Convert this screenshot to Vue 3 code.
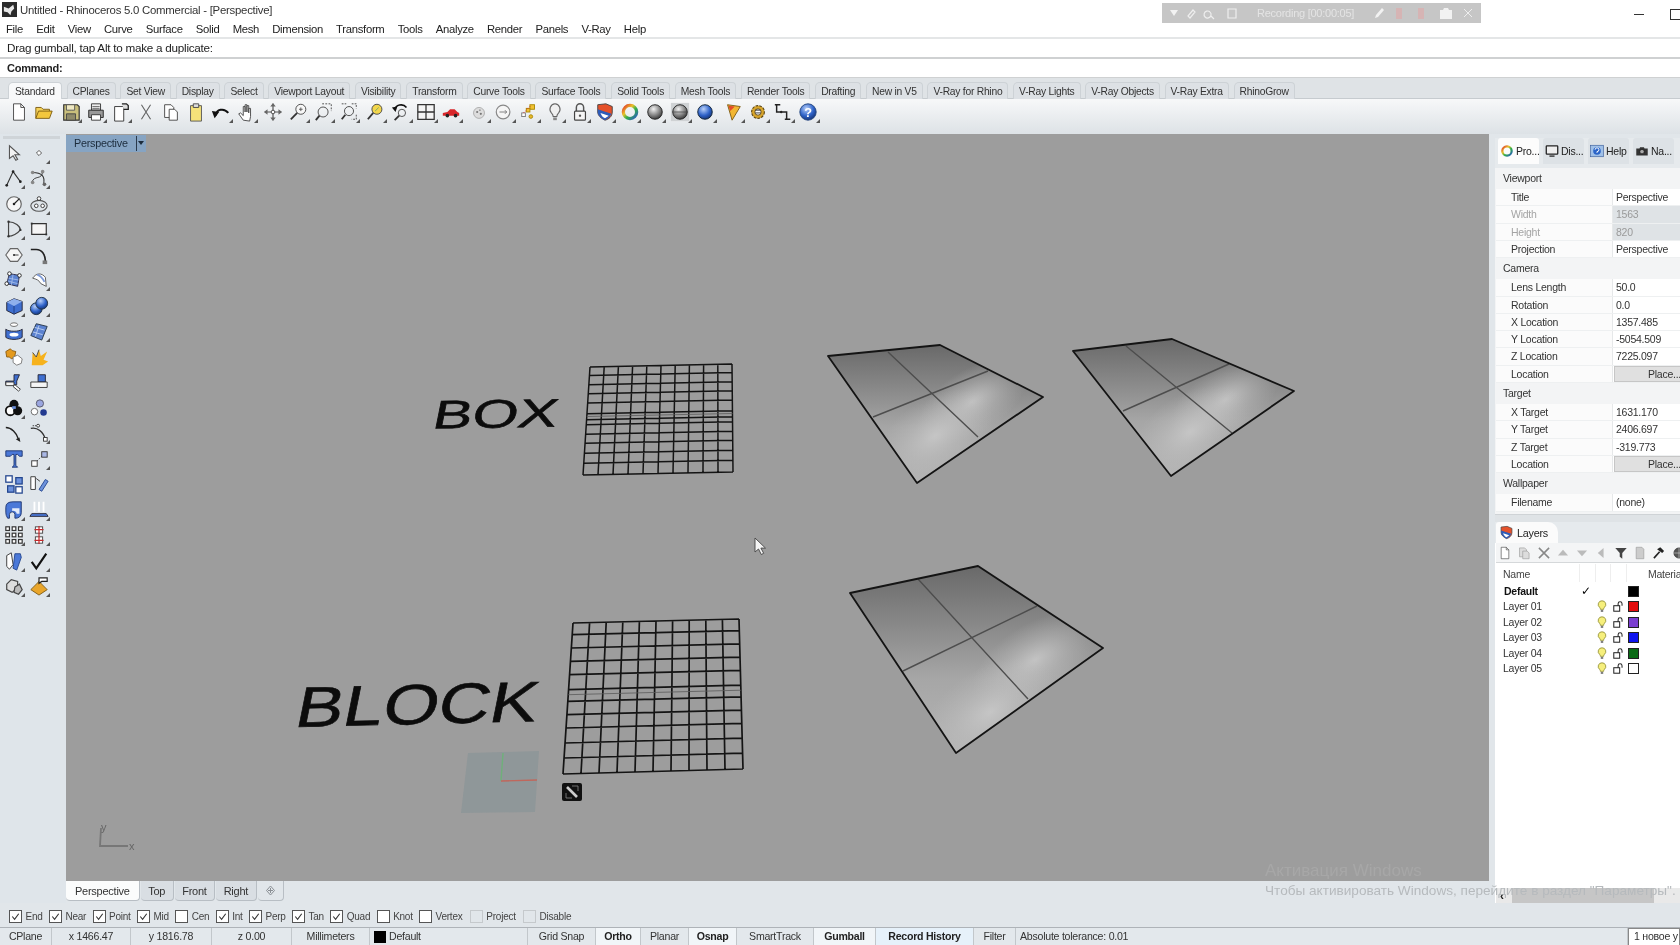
<script setup>
const menus = ['File', 'Edit', 'View', 'Curve', 'Surface', 'Solid', 'Mesh', 'Dimension', 'Transform', 'Tools', 'Analyze', 'Render', 'Panels', 'V-Ray', 'Help']
const toolTabs = ['Standard', 'CPlanes', 'Set View', 'Display', 'Select', 'Viewport Layout', 'Visibility', 'Transform', 'Curve Tools', 'Surface Tools', 'Solid Tools', 'Mesh Tools', 'Render Tools', 'Drafting', 'New in V5', 'V-Ray for Rhino', 'V-Ray Lights', 'V-Ray Objects', 'V-Ray Extra', 'RhinoGrow']

// icon bodies, all drawn on a 22x22 box
const K = 'fill="none" stroke="#333" stroke-width="1.2"'
const ic = {
  page: `<path d="M5 2h8l4 4v14H5z" fill="#fff" stroke="#444"/><path d="M13 2v4h4" fill="none" stroke="#444"/>`,
  open: `<path d="M2 18V6h6l2 2h7v3" fill="#f5d25a" stroke="#7a5a10"/><path d="M2 18l3-8h15l-3 8z" fill="#f3c73d" stroke="#7a5a10"/>`,
  save: `<path d="M3 3h15l2 2v15H3z" fill="#c9bf7c" stroke="#333" stroke-width="1.3"/><path d="M6 3h9v6H6z" fill="#efe9c4" stroke="#555"/><path d="M6 13h10v7H6z" fill="#8e8a6a" stroke="#444"/>`,
  print: `<path d="M6 2h10v7H6z" fill="#eee" stroke="#333"/><path d="M3 9h16v8H3z" fill="#999" stroke="#222"/><path d="M6 14h10v6H6z" fill="#fff" stroke="#333"/><path d="M7 5h8M7 7h8" stroke="#666"/>`,
  sheet: `<path d="M4 5h10v16H4z" fill="#fff" stroke="#333"/><path d="M12 2h5l2 2v4h-5" fill="#ddd" stroke="#222" stroke-width="1.4"/>`,
  cut: `<path d="M6 3l10 16M16 3L6 19" ${K} stroke-width="1.5" opacity=".75"/>`,
  copy: `<path d="M4 3h7l3 3v11H4z" fill="#fff" stroke="#444"/><path d="M9 8h6l3 3v9H9z" fill="#fff" stroke="#444"/>`,
  paste: `<path d="M5 4h12v17H5z" fill="#f5e27a" stroke="#555" rx="2"/><path d="M8 2h6v4H8z" fill="#ddd" stroke="#444"/>`,
  undo: `<path d="M5 15C6 8 14 6 19 12" fill="none" stroke="#111" stroke-width="2.2"/><path d="M1 10l8 1-5 7z" fill="#111"/>`,
  hand: `<path d="M8 20l-5-7 2-1 3 3V5l2 0v6-8h2v8-7h2v8-5h2v9l-1 5z" fill="#fff" stroke="#444"/>`,
  move: `<path d="M11 2v18M2 11h18" stroke="#555" stroke-width="1.3"/><path d="M11 1l-3 4h6zM11 21l-3-4h6zM1 11l4-3v6zM21 11l-4-3v6z" fill="#666"/><circle cx="11" cy="11" r="2" fill="#fff" stroke="#444"/>`,
  zoom: `<circle cx="13" cy="8" r="5.5" fill="#f7f7f7" stroke="#444"/><path d="M9 12l-7 7" stroke="#333" stroke-width="2"/><path d="M11 8h4M13 6v4" stroke="#555"/>`,
  zoomSel: `<circle cx="10" cy="11" r="5.5" fill="none" stroke="#444"/><path d="M6 15l-4 5" stroke="#333" stroke-width="2"/><path d="M9 2h10v8" fill="none" stroke="#444" stroke-dasharray="2 1.5"/>`,
  zoomExt: `<circle cx="11" cy="10" r="5" fill="none" stroke="#444"/><path d="M7 14l-4 5" stroke="#333" stroke-width="2"/><path d="M3 2h5M14 2h5v5M19 14v5h-5" fill="none" stroke="#444" stroke-dasharray="2 1.2"/>`,
  zoomTgt: `<circle cx="12" cy="8" r="5.5" fill="#f3d64c" stroke="#444"/><path d="M8 12l-6 7" stroke="#333" stroke-width="2"/><path d="M10 10l4-4" stroke="#7a6"/>`,
  rotate: `<path d="M4 9C5 3 13 1 17 6" fill="none" stroke="#111" stroke-width="1.8"/><path d="M1 6l6-1-2 6z" fill="#111"/><circle cx="12" cy="12" r="4" fill="none" stroke="#444"/><path d="M9 15l-5 5" stroke="#333" stroke-width="2"/>`,
  four: `<path d="M2 3h18v16H2z" fill="#f4f4f4" stroke="#333" stroke-width="1.4"/><path d="M11 3v16M2 11h18" stroke="#333" stroke-width="1.4"/>`,
  car: `<path d="M2 15v-3l5-1 3-3h5l3 3 2 1v3z" fill="#d8262a"/><circle cx="7" cy="15" r="2" fill="#222"/><circle cx="16" cy="15" r="2" fill="#222"/>`,
  dots: `<circle cx="11" cy="12" r="6" fill="#ddd" stroke="#aaa"/><circle cx="9" cy="11" r="1.2" fill="#777"/><circle cx="13" cy="13" r="1.2" fill="#777"/><circle cx="12" cy="9" r="1" fill="#999"/>`,
  clock: `<circle cx="10" cy="11" r="7.5" fill="#f5f5f5" stroke="#888" stroke-width="1.3"/><path d="M6 11h8l-2-2M14 11l-2 2" fill="none" stroke="#777"/>`,
  snaps: `<rect x="3" y="12" width="4" height="4" fill="#fff" stroke="#777"/><rect x="12" y="3" width="5" height="5" fill="#f1c232" stroke="#a80"/><rect x="8" y="7" width="4" height="4" fill="#f1c232" stroke="#a80"/><path d="M5 12l8-8" stroke="#d33" stroke-dasharray="1.5 1.5"/><circle cx="13" cy="16" r="2" fill="#e8b82c" stroke="#a80"/>`,
  bulb: `<path d="M11 2a6 6 0 0 0-4 10c1 1 2 3 2 4h4c0-1 1-3 2-4A6 6 0 0 0 11 2z" fill="#f0f0f0" stroke="#666" stroke-width="1.2"/><path d="M9 17h4v3H9z" fill="#888"/>`,
  lock: `<path d="M7 10V6a4 4 0 0 1 8 0v4" fill="none" stroke="#555" stroke-width="1.6"/><rect x="5" y="10" width="12" height="10" rx="1" fill="#f5f5f5" stroke="#444" stroke-width="1.3"/><circle cx="11" cy="15" r="1.3" fill="#555"/>`,
  layers: `<path d="M3 3l9-1 7 3v6c0 5-4 8-8 9-4-2-8-5-8-9z" fill="#e5512a" stroke="#444"/><path d="M3 8l15 5c-1 3-4 6-7 7-4-2-8-5-8-9z" fill="#2e5cb8"/><path d="M6 12l9 3c-1 1-3 2-4 3-2-1-4-3-5-6z" fill="#fff"/>`,
  ring: `<circle cx="11" cy="11" r="7.3" fill="none" stroke="url(#ringGrad)" stroke-width="3.6"/>`,
  sphere: `<circle cx="11" cy="11" r="8" fill="url(#graySphere)" stroke="#222"/>`,
  sphereBox: `<rect x="1" y="1" width="20" height="20" fill="#cfd2d4"/><circle cx="11" cy="11" r="8" fill="url(#graySphere)" stroke="#222"/><path d="M3 11h16" stroke="#444" stroke-width=".8"/>`,
  blueSphere: `<circle cx="11" cy="11" r="8" fill="url(#blueSphere)" stroke="#123"/>`,
  funnel: `<path d="M5 3l14 2-9 15z" fill="#f2b632" stroke="#7c5a15"/><path d="M6 4l7 1-5 5z" fill="#e24b2a"/>`,
  gears: `<circle cx="11" cy="11" r="7" fill="#d8a52a" stroke="#5a430f" stroke-width="1.2" stroke-dasharray="3 1.2"/><circle cx="11" cy="11" r="3.5" fill="#fff" stroke="#5a430f"/><path d="M8 9h6M8 12h6" stroke="#333"/>`,
  dims: `<path d="M4 3v8h11v8" fill="none" stroke="#222" stroke-width="1.6"/><path d="M2 3h6M13 19h6" stroke="#222" stroke-width="1.6"/><circle cx="9" cy="11" r="1.3" fill="#222"/>`,
  help: `<circle cx="11" cy="11" r="9" fill="url(#blueSphere)" stroke="#23467f"/><text x="11" y="16" text-anchor="middle" font-family="Liberation Sans, sans-serif" font-weight="700" font-size="14" fill="#fff">?</text>`,

  arrow: `<path d="M6 3v14l4-3 3 5 2-1-3-5h5z" fill="#f2f2f2" stroke="#555" stroke-width="1.2"/>`,
  point: `<rect x="9" y="9" width="4" height="4" transform="rotate(45 11 11)" fill="#fff" stroke="#555"/>`,
  poly: `<path d="M3 19L10 4l8 11" ${K}/><circle cx="3" cy="19" r="1.5" fill="#222"/><circle cx="10" cy="4" r="1.5" fill="#222"/><circle cx="18" cy="15" r="1.5" fill="#222"/>`,
  curve: `<path d="M4 5c10 0 14 4 12 13" ${K}/><path d="M3 16C6 7 14 14 15 4" fill="none" stroke="#333"/><circle cx="4" cy="5" r="2" fill="#888"/><circle cx="15" cy="4" r="2" fill="#888"/><circle cx="4" cy="16" r="2" fill="#888"/><circle cx="17" cy="18" r="2" fill="#666"/>`,
  circle: `<circle cx="11" cy="11" r="8" fill="#f6f6f6" stroke="#666" stroke-width="1.3"/><path d="M11 11l6-6" stroke="#222" stroke-width="1.3"/><circle cx="11" cy="11" r="1.4" fill="#222"/>`,
  ellipse: `<ellipse cx="11" cy="13" rx="9" ry="6" fill="none" stroke="#555" stroke-width="1.2"/><circle cx="11" cy="5" r="2" fill="#fff" stroke="#333"/><circle cx="8" cy="13" r="2" fill="#fff" stroke="#333"/><circle cx="15" cy="13" r="2" fill="#fff" stroke="#333"/>`,
  arc: `<path d="M5 3c7 0 13 5 13 9-3 4-9 7-13 7z" fill="none" stroke="#444" stroke-width="1.3"/><circle cx="5" cy="3" r="1.3" fill="#333"/><circle cx="5" cy="19" r="1.3" fill="#333"/><circle cx="18" cy="12" r="1.3" fill="#333"/>`,
  rect: `<path d="M3 5h16v12H3z" fill="#f5f5f5" stroke="#333" stroke-width="1.3"/><rect x="2" y="4" width="2" height="2" fill="#333"/><rect x="18" y="16" width="2" height="2" fill="#333"/>`,
  hex: `<path d="M7 4h8l5 7-5 7H7l-5-7z" fill="#f6f6f6" stroke="#666" stroke-width="1.2"/><circle cx="11" cy="11" r="1.2" fill="#333"/><path d="M11 11h5" stroke="#333"/>`,
  fillet: `<path d="M2 5h6c6 0 10 5 10 14" fill="none" stroke="#222" stroke-width="1.8"/><rect x="15" y="17" width="5" height="4" fill="#777"/>`,
  patch: `<path d="M6 4l11 2-2 12-12-3z" fill="#5b82d0" stroke="#224"/><path d="M5 9l11 2M4 12l11 3M10 5l-2 12" stroke="#bcd0f2" stroke-width=".7"/><circle cx="6" cy="4" r="2" fill="#fff" stroke="#222"/><circle cx="17" cy="6" r="2" fill="#fff" stroke="#222"/><circle cx="3" cy="15" r="2" fill="#fff" stroke="#222"/>`,
  sweep: `<path d="M4 9C8 3 14 3 18 8l1 10-6-3C11 11 8 10 4 9z" fill="#fff" stroke="#555"/><path d="M9 5c3 1 6 4 8 8" stroke="#7e9bd8" stroke-width="2" fill="none"/>`,
  box: `<path d="M3 7l8-4 9 3v10l-9 4-8-4z" fill="#3f6fd0" stroke="#223"/><path d="M3 7l8 4 9-5-9-3z" fill="#8fb0ec"/><path d="M11 11v9" stroke="#1e3c80"/>`,
  spheres: `<circle cx="8" cy="14" r="6.5" fill="url(#blueSphere)" stroke="#234"/><circle cx="14" cy="8" r="6.5" fill="url(#blueSphere)" stroke="#234"/>`,
  ringSurf: `<path d="M2 9v9c4 3 14 3 18 0V9c-3 3-15 3-18 0z" fill="#3f6fd0" stroke="#223"/><ellipse cx="11" cy="15" rx="5" ry="2" fill="#fff"/><ellipse cx="11" cy="4" rx="4" ry="2" fill="#fff" stroke="#666"/>`,
  sheet2: `<path d="M8 3l12 3-6 15L2 16z" fill="#5b82d0" stroke="#234"/><path d="M6 7l11 3M4 12l11 3M11 5l-4 12" stroke="#bcd0f2"/>`,
  puzzle: `<path d="M2 5l5-3 2 2 4 1-1 4 1 2-5 2-2-2-3 0z" fill="#e49a1e" stroke="#8a5a10"/><path d="M10 11l5-2 5 4-1 5-5 2-4-3z" fill="#fff" stroke="#777"/>`,
  burst: `<path d="M3 20l1-14 4 5 3-8 2 7 7-5-4 9 5 2-6 4z" fill="#f6b21d"/><path d="M4 6l4 5 3-8" fill="none" stroke="#444"/>`,
  tool1: `<path d="M11 3h6l-3 7v4H2v-4h9z" fill="#3f6fd0" stroke="#223"/><path d="M2 11h9v4H2z" fill="#f5f5f5" stroke="#333"/><path d="M12 14l6 5-2 2-6-5z" fill="#fff" stroke="#333"/>`,
  tool2: `<path d="M10 3h8v8h-8z" fill="#3f6fd0" stroke="#223"/><path d="M2 11h18v6H2z" fill="#f5f5f5" stroke="#333"/>`,
  bool: `<circle cx="11" cy="7" r="5" fill="#111"/><circle cx="7" cy="14" r="5" fill="#fff" stroke="#111" stroke-width="2"/><circle cx="15" cy="14" r="5" fill="#111"/><path d="M9 9h4v3H9z" fill="#6b8ed8"/>`,
  trio: `<circle cx="12" cy="6" r="4" fill="#9aa6e0" stroke="#556"/><circle cx="6" cy="15" r="3.6" fill="#fff" stroke="#666"/><circle cx="16" cy="16" r="3.6" fill="#223a90"/>`,
  bend: `<path d="M2 5c6 0 12 6 14 13" fill="none" stroke="#222" stroke-width="1.6"/><path d="M18 21l-5-3 4-2z" fill="#222"/>`,
  offset: `<path d="M2 6c7-2 14 4 16 12" fill="none" stroke="#333" stroke-width="1.5"/><path d="M4 3h4" stroke="#333" stroke-dasharray="1.5 1"/><circle cx="10" cy="3" r="1.6" fill="#fff" stroke="#333"/><rect x="16" y="16" width="4" height="4" fill="#fff" stroke="#333"/>`,
  tee: `<path d="M2 2h18v6h-3l-2-2h-2v12l2 2H9l2-2V6H9L7 8H2z" fill="#4a78d8" stroke="#1e3570"/>`,
  diag: `<rect x="3" y="13" width="6" height="6" fill="#fff" stroke="#333"/><rect x="14" y="3" width="6" height="6" fill="#aab8e6" stroke="#333"/><path d="M9 13l5-5" stroke="#333" stroke-dasharray="1.5 1.5"/>`,
  group: `<rect x="2" y="2" width="7" height="7" fill="#fff" stroke="#23468f" stroke-width="1.4"/><rect x="13" y="4" width="7" height="7" fill="#6d92dc" stroke="#23468f" stroke-width="1.4"/><rect x="4" y="13" width="7" height="7" fill="#6d92dc" stroke="#23468f" stroke-width="1.4"/><rect x="13" y="14" width="7" height="7" fill="#fff" stroke="#23468f" stroke-width="1.4"/>`,
  scale: `<path d="M2 3h5v14H2z" fill="#fff" stroke="#333"/><path d="M11 17l7-11 3 2-7 11z" fill="#6d92dc" stroke="#23468f"/><path d="M8 5l4 3" stroke="#333"/>`,
  arch: `<path d="M2 8q0-6 8-6h9v12c0 4-3 6-6 6h-1v-4a3 3 0 0 0-6 0v4H4q-2-3-2-6z" fill="#4a78d8" stroke="#1e3570"/><path d="M9 9h8v6h-3a4 4 0 0 0-5-3z" fill="#fff" opacity=".85"/>`,
  pins: `<path d="M6 2v11M11 2v11M16 2v11" stroke="#fff" stroke-width="2"/><path d="M3 15h16l2 3H1z" fill="#4a78d8" stroke="#223"/>`,
  array: `<g fill="#fff" stroke="#333" stroke-width="1.3"><rect x="2" y="2" width="4" height="4"/><rect x="9" y="2" width="4" height="4"/><rect x="16" y="2" width="4" height="4"/><rect x="2" y="9" width="4" height="4"/><rect x="9" y="9" width="4" height="4"/><rect x="16" y="9" width="4" height="4"/><rect x="2" y="16" width="4" height="4"/><rect x="9" y="16" width="4" height="4"/><rect x="16" y="16" width="4" height="4"/></g>`,
  chain: `<rect x="7" y="2" width="8" height="7" fill="#fff" stroke="#444"/><rect x="7" y="13" width="8" height="7" fill="#fff" stroke="#444"/><path d="M11 1v20M6 5h10M6 17h10" stroke="#c8282a" stroke-width="1.3"/>`,
  sheets: `<path d="M3 5l5-3 2 13-4 5-3-3z" fill="#fff" stroke="#333"/><path d="M12 3h6l1 4-5 14-4-2z" fill="#4a78d8" stroke="#23468f"/>`,
  check: `<path d="M3 12l5 7L19 3" fill="none" stroke="#111" stroke-width="2.4"/>`,
  cubes: `<path d="M3 9l5-5 7 2v7l-6 5-6-3z" fill="#ddd" stroke="#444" stroke-width="1.3"/><path d="M12 12l5-3 3 6-4 5-5-2z" fill="#bbb" stroke="#444" stroke-width="1.3"/>`,
  cone: `<path d="M2 15l9-9 9 9-9 6z" fill="#e9a52a" stroke="#7c5a15"/><path d="M11 2h9v4h-6l-3 2z" fill="#fff" stroke="#222" stroke-width="1.3"/>`,

  hammer: `<path d="M3 19L12 9" stroke="#222" stroke-width="2.6"/><path d="M8 5l5-3 6 6-3 3z" fill="#222"/>`,
  globe: `<circle cx="11" cy="11" r="8" fill="#555" stroke="#222"/><path d="M11 3v16M3 11h16" stroke="#ccc"/>`
}

const topIcons = [
  ['page'], ['open'], ['save', 1, 2], ['print', 1], ['sheet', 1], ['cut'], ['copy'], ['paste'], ['undo', 1], ['hand', 1],
  ['move', 0, 2], ['zoom', 1], ['zoomSel', 1], ['zoomExt', 1], ['zoomTgt', 1, 2], ['rotate', 1], ['four', 1], ['car', 1],
  ['dots', 1, 3], ['clock', 1], ['snaps', 1], ['bulb', 1], ['lock', 1], ['layers', 1], ['ring', 1], ['sphere', 1],
  ['sphereBox', 1], ['blueSphere', 1], ['funnel', 1, 3], ['gears', 1], ['dims', 1], ['help', 1]
].map(([name, fly, gap]) => ({ name, fly: !!fly, gap: gap || 0 }))

const sideRows = [
  [['arrow', 0], ['point', 1]], [['poly', 1], ['curve', 1]], [['circle', 1], ['ellipse', 1]], [['arc', 1], ['rect', 1]],
  [['hex', 1], ['fillet', 0]], [['patch', 1], ['sweep', 1]], [['box', 1], ['spheres', 1]], [['ringSurf', 1], ['sheet2', 1]],
  [['puzzle', 0], ['burst', 0]], [['tool1', 0], ['tool2', 0]], [['bool', 1], ['trio', 0]], [['bend', 0], ['offset', 1]],
  [['tee', 0], ['diag', 1]], [['group', 0], ['scale', 0]], [['arch', 1], ['pins', 1]], [['array', 1], ['chain', 1]],
  [['sheets', 1], ['check', 1]], [['cubes', 1], ['cone', 1]]
]

const propRows = [
  { head: 'Viewport' },
  { label: 'Title', value: 'Perspective' },
  { label: 'Width', value: '1563', off: true },
  { label: 'Height', value: '820', off: true },
  { label: 'Projection', value: 'Perspective' },
  { head: 'Camera' },
  { label: 'Lens Length', value: '50.0' },
  { label: 'Rotation', value: '0.0' },
  { label: 'X Location', value: '1357.485' },
  { label: 'Y Location', value: '-5054.509' },
  { label: 'Z Location', value: '7225.097' },
  { label: 'Location', button: 'Place...' },
  { head: 'Target' },
  { label: 'X Target', value: '1631.170' },
  { label: 'Y Target', value: '2406.697' },
  { label: 'Z Target', value: '-319.773' },
  { label: 'Location', button: 'Place...' },
  { head: 'Wallpaper' },
  { label: 'Filename', value: '(none)' }
]

const layers = [
  { name: 'Layer 01', color: '#e30d0d' },
  { name: 'Layer 02', color: '#7b3fd0' },
  { name: 'Layer 03', color: '#0f14ee' },
  { name: 'Layer 04', color: '#0b6b16' },
  { name: 'Layer 05', color: '#ffffff' }
]

const snaps = [
  ['End', 1], ['Near', 1], ['Point', 1], ['Mid', 1], ['Cen', 0], ['Int', 1], ['Perp', 1], ['Tan', 1], ['Quad', 1], ['Knot', 0], ['Vertex', 0], ['Project', 0, 1], ['Disable', 0, 1]
].map(([name, on, dim]) => ({ name, on: !!on, dim: !!dim }))

const statusCells = [
  { text: 'CPlane', w: 52 }, { text: 'x 1466.47', w: 79 }, { text: 'y 1816.78', w: 81 }, { text: 'z 0.00', w: 80 }, { text: 'Millimeters', w: 78 }
]
const statusToggles = [
  { text: 'Grid Snap', w: 68 }, { text: 'Ortho', w: 45, on: 1 }, { text: 'Planar', w: 48 }, { text: 'Osnap', w: 48, on: 1 },
  { text: 'SmartTrack', w: 77 }, { text: 'Gumball', w: 62, on: 1 }, { text: 'Record History', w: 98, on: 2 }, { text: 'Filter', w: 42 }
]

// wireframe grids
function lerp(a, b, t) { return [a[0] + (b[0] - a[0]) * t, a[1] + (b[1] - a[1]) * t] }
function seg(p, q) { return `M${p[0].toFixed(1)} ${p[1].toFixed(1)}L${q[0].toFixed(1)} ${q[1].toFixed(1)}` }
function rowPath(c, rows, last) {
  return rows.map(r => seg(lerp(c[0], c[3], r / last), lerp(c[1], c[2], r / last))).join('')
}
function colPath(c) {
  let d = ''
  for (let i = 0; i <= 10; i++) d += seg(lerp(c[0], c[1], i / 10), lerp(c[3], c[2], i / 10))
  return d
}
const upperBox = [[590, 367], [732, 364], [733, 472], [583, 475]]
const lowerBox = [[573, 623], [739, 619], [743, 769], [563, 774]]
const upperGrid = colPath(upperBox) + rowPath(upperBox, [0, 25, 53, 80, 108, 140, 158, 173, 201, 228, 258, 288, 323], 323)
const lowerGrid = colPath(lowerBox) + rowPath(lowerBox, [0, 35, 75, 115, 155, 200, 235, 275, 315, 360, 405, 453], 453)
const bandLines = rowPath(upperBox, [148], 323) + rowPath(lowerBox, [215], 453)

const planes = [
  { id: 'pa', pts: '828,356 940,345 1043,397 917,483', inner: 'M888 352L978 437M873 417L988 371', spots: [[972, 402, 62, 32], [935, 436, 64, 38]] },
  { id: 'pb', pts: '1073,351 1172,339 1294,391 1171,476', inner: 'M1126 346L1232 433M1123 411L1229 364', spots: [[1225, 400, 62, 32], [1190, 432, 64, 38]] },
  { id: 'pc', pts: '850,593 978,566 1103,648 956,753', inner: 'M918 579L1028 699M903 671L1037 606', spots: [[1035, 660, 70, 36], [990, 712, 74, 44]] }
]
</script>

<template>
  <div class="app">
    <svg class="defs" width="0" height="0">
      <defs>
        <linearGradient id="ringGrad" x1="0" y1="0" x2="1" y2="1">
          <stop offset="0" stop-color="#e0332b" />
          <stop offset=".35" stop-color="#e8c22a" />
          <stop offset=".6" stop-color="#2fae4a" />
          <stop offset="1" stop-color="#2a55c8" />
        </linearGradient>
        <radialGradient id="graySphere" cx=".4" cy=".3" r=".8">
          <stop offset="0" stop-color="#f2f2f2" />
          <stop offset=".6" stop-color="#777" />
          <stop offset="1" stop-color="#222" />
        </radialGradient>
        <radialGradient id="blueSphere" cx=".4" cy=".3" r=".8">
          <stop offset="0" stop-color="#b8d0fa" />
          <stop offset=".55" stop-color="#2e62c8" />
          <stop offset="1" stop-color="#10285f" />
        </radialGradient>
      </defs>
    </svg>

    <header class="titlebar">
      <svg class="app-icon" viewBox="0 0 16 16">
        <rect width="16" height="16" fill="#2b2b2b" />
        <path d="M2 5l5 2 5-4 1 4-3 3-1 4-3-3-4-1z" fill="#e8e8e8" />
      </svg>
      <span>Untitled - Rhinoceros 5.0 Commercial - [Perspective]</span>
    </header>
    <div class="recorder">
      <span class="rec-arrow"></span>
      <svg class="rec-icons" width="62" height="14" viewBox="0 0 62 14" fill="none" stroke="#eee" stroke-width="1.2">
        <path d="M6 10l5-6 2 2-5 6zM28 6a3.500 3.500 0 1 0 .1 .1M29 10l3 3M46 3h8v9h-8z" />
      </svg>
      <span class="rec-text">Recording [00:00:05]</span>
      <svg class="rec-icons rec-right" width="106" height="14" viewBox="0 0 106 14">
        <path d="M2 12l1-3 6-7 2 2-6 7z" fill="#f2f2f2" />
        <rect x="23" y="2" width="6" height="11" fill="#d6b4b4" />
        <rect x="45" y="2" width="6" height="11" fill="#d6b4b4" />
        <path d="M67 4h3l1-2h4l1 2h3v9H67z" fill="#f2f2f2" />
        <path d="M91 3l8 8M99 3l-8 8" stroke="#eee" fill="none" />
      </svg>
    </div>
    <div class="win-controls"><span class="win-min"></span><span class="win-max"></span></div>

    <nav class="menubar"><span v-for="m in menus" :key="m">{{ m }}</span></nav>
    <div class="logline">Drag gumball, tap Alt to make a duplicate:</div>
    <div class="cmdline">Command:</div>

    <div class="tabstrip">
      <span v-for="(t, i) in toolTabs" :key="t" class="tooltab" :class="{ active: i === 0 }">{{ t }}</span>
    </div>
    <div class="iconbar">
      <span
        v-for="(icon, i) in topIcons"
        :key="i"
        class="tbtn"
        :class="{ fly: icon.fly, 'gap-2': icon.gap === 2, 'gap-3': icon.gap === 3 }"
      ><svg viewBox="0 0 22 22" v-html="ic[icon.name]"></svg></span>
    </div>

    <main class="workspace">
      <aside class="sidebar">
        <div class="gripper"></div>
        <div v-for="(row, r) in sideRows" :key="r" class="siderow">
          <span v-for="cell in row" :key="cell[0]" class="tbtn" :class="{ fly: cell[1] }"><svg viewBox="0 0 22 22" v-html="ic[cell[0]]"></svg></span>
        </div>
      </aside>

      <section class="center">
        <div class="viewport">
          <div class="vp-label">Perspective<i class="vp-sep"></i><i class="vp-caret"></i></div>
          <svg class="scene" viewBox="66 134 1423 747">
            <defs>
              <linearGradient id="planeShade" x1="0" y1="0" x2="0" y2="1">
                <stop offset="0" stop-color="#696969" />
                <stop offset=".3" stop-color="#878787" />
                <stop offset=".6" stop-color="#a6a6a6" />
                <stop offset="1" stop-color="#b4b4b4" />
              </linearGradient>
              <radialGradient id="planeSpot">
                <stop offset="0" stop-color="#cacaca" stop-opacity=".85" />
                <stop offset=".5" stop-color="#c2c2c2" stop-opacity=".4" />
                <stop offset="1" stop-color="#bbb" stop-opacity="0" />
              </radialGradient>
              <clipPath v-for="p in planes" :id="p.id" :key="p.id"><polygon :points="p.pts" /></clipPath>
            </defs>

            <g v-for="p in planes" :key="p.id">
              <polygon :points="p.pts" fill="url(#planeShade)" />
              <g :clip-path="`url(#${p.id})`">
                <ellipse
                  v-for="(s, i) in p.spots"
                  :key="i"
                  :cx="s[0]"
                  :cy="s[1]"
                  :rx="s[2]"
                  :ry="s[3]"
                  :transform="`rotate(-32 ${s[0]} ${s[1]})`"
                  fill="url(#planeSpot)"
                />
              </g>
              <path :d="p.inner" fill="none" stroke="#4d4d4d" stroke-width="1.4" />
              <polygon :points="p.pts" fill="none" stroke="#141414" stroke-width="1.8" stroke-linejoin="round" />
            </g>

            <path :d="upperGrid" fill="none" stroke="#141414" stroke-width="1.5" />
            <path :d="lowerGrid" fill="none" stroke="#141414" stroke-width="1.7" />
            <path :d="bandLines" fill="none" stroke="#5a5a5a" stroke-width=".8" />

            <text class="scene-text" transform="matrix(1.47 -.02 -.2 1 431 428.5)" font-size="40">BOX</text>
            <text class="scene-text" transform="matrix(1.25 -.03 -.2 1 293 727)" font-size="57">BLOCK</text>

            <polygon points="468,753 539,751 535,812 461,813" fill="#8f9799" />
            <path d="M503 753L501 781" stroke="#6fb07a" stroke-width="1.4" fill="none" />
            <path d="M501 781L537 780" stroke="#c0675c" stroke-width="1.4" fill="none" />

            <g>
              <rect x="562" y="783" width="20" height="18" rx="2" fill="#111" />
              <path d="M567 787l10 10" stroke="#ccc" stroke-width="2.600" />
              <path d="M572 786h6v5M572 798h-6v-5" fill="none" stroke="#888" stroke-width=".8" />
            </g>

            <path d="M755 538v14l3.500-3 2.800 5.500 2.400-1.200-2.800-5.200h4.600z" fill="#f4f4f4" stroke="#444" stroke-width=".9" />

            <path d="M101 828l-1 18h28" fill="none" stroke="#777" stroke-width="1.800" />
            <text class="axis-text" x="101" y="831">y</text>
            <text class="axis-text" x="129" y="850">x</text>
          </svg>
        </div>
        <div class="vp-tabs">
          <span class="vp-tab active">Perspective</span>
          <span class="vp-tab">Top</span>
          <span class="vp-tab">Front</span>
          <span class="vp-tab">Right</span>
          <span class="vp-tab add">
            <svg width="11" height="11" viewBox="0 0 11 11"><path d="M5.500 1l4 4.500-4 4.500-4-4.500zM5.500 3v5M3 5.500h5" fill="none" stroke="#8a8f94" /></svg>
          </span>
        </div>
      </section>

      <aside class="panels">
        <div class="panel-tabs">
          <span class="ptab active"><svg viewBox="0 0 22 22" v-html="ic.ring"></svg>Pro...</span>
          <span class="ptab">
            <svg viewBox="0 0 22 22"><rect x="2" y="3" width="18" height="13" rx="1" fill="#eee" stroke="#222" stroke-width="2" /><path d="M7 19h8" stroke="#222" stroke-width="2" /></svg>Dis...
          </span>
          <span class="ptab">
            <svg viewBox="0 0 22 22"><rect x="1" y="2" width="20" height="18" fill="#9fc0e8" stroke="#3a5d9a" /><circle cx="11" cy="11" r="6" fill="#2a64c8" /><path d="M8 9a3 3 0 1 1 3 3v2" fill="none" stroke="#fff" stroke-width="1.5" /></svg>Help
          </span>
          <span class="ptab">
            <svg viewBox="0 0 22 22"><path d="M2 7h5l1-2h6l1 2h5v11H2z" fill="#333" /><circle cx="11" cy="12" r="3.500" fill="#aaa" stroke="#111" /></svg>Na...
          </span>
        </div>
        <div class="props">
          <template v-for="(row, i) in propRows" :key="i">
            <div v-if="row.head" class="prop-head">{{ row.head }}</div>
            <div v-else class="prop-row" :class="{ off: row.off }">
              <span class="prop-label">{{ row.label }}</span>
              <span v-if="row.button" class="prop-btn">{{ row.button }}</span>
              <span v-else class="prop-value">{{ row.value }}</span>
            </div>
          </template>
        </div>

        <div class="layers-gap"></div>
        <div class="layer-tabs">
          <span class="ltab"><svg viewBox="0 0 22 22" v-html="ic.layers"></svg>Layers</span>
        </div>
        <div class="layers">
          <div class="layer-tools">
            <svg viewBox="0 0 22 22" v-html="ic.page"></svg>
            <svg viewBox="0 0 22 22"><path d="M4 3h8l3 3v11H4z" fill="#ddd" stroke="#999" /><path d="M9 8h7l3 3v9H9z" fill="#ddd" stroke="#999" /></svg>
            <svg viewBox="0 0 22 22"><path d="M3 3l16 16M19 3L3 19" stroke="#888" stroke-width="2.400" /></svg>
            <svg viewBox="0 0 22 22"><path d="M11 6l8 9H3z" fill="#bbb" /></svg>
            <svg viewBox="0 0 22 22"><path d="M11 16l8-9H3z" fill="#bbb" /></svg>
            <svg viewBox="0 0 22 22"><path d="M6 11l9-8v16z" fill="#bbb" /></svg>
            <svg viewBox="0 0 22 22"><path d="M2 3h18l-7 8v9l-4-3v-6z" fill="#444" /></svg>
            <svg viewBox="0 0 22 22"><path d="M5 2h9l3 3v15H5z" fill="#ccc" stroke="#999" /></svg>
            <svg viewBox="0 0 22 22" v-html="ic.hammer"></svg>
            <svg viewBox="0 0 22 22" v-html="ic.globe"></svg>
          </div>
          <div class="layer-head">
            <span class="lh-name">Name</span>
            <i></i><i></i><i></i><i></i>
            <span class="lh-mat">Material</span>
          </div>
          <div class="layer-row current">
            <span class="l-name">Default</span>
            <span class="l-check">✓</span>
            <span class="l-color" style="background:#000"></span>
          </div>
          <div v-for="l in layers" :key="l.name" class="layer-row">
            <span class="l-name">{{ l.name }}</span>
            <svg class="l-bulb" viewBox="0 0 12 16"><path d="M6 1a4.500 4.500 0 0 0-3 8c.7.700 1 1.500 1 2.500h4c0-1 .3-1.800 1-2.500A4.500 4.500 0 0 0 6 1z" fill="#f6ef7c" stroke="#8d8a30" /><path d="M4.500 12.500h3v2h-3z" fill="#666" /></svg>
            <svg class="l-lock" viewBox="0 0 14 14"><rect x="1" y="6" width="7.500" height="7" fill="#fff" stroke="#222" stroke-width="1.300" /><path d="M6.500 6V3.500a2.500 2.500 0 0 1 5 0V6" fill="none" stroke="#222" stroke-width="1.300" /></svg>
            <span class="l-color" :style="{ background: l.color }"></span>
          </div>
          <div class="layer-fill"></div>
          <div class="hscroll"><span class="hs-arrow">‹</span><span class="hs-thumb"></span></div>
        </div>
      </aside>
    </main>

    <div class="osnaps">
      <label v-for="s in snaps" :key="s.name" class="snap" :class="{ dim: s.dim }">
        <span class="box">
          <svg v-if="s.on" viewBox="0 0 12 12"><path d="M2.500 6l2.500 3 4.500-6" fill="none" stroke="#333" stroke-width="1.200" /></svg>
        </span>{{ s.name }}
      </label>
    </div>

    <footer class="statusbar">
      <span v-for="c in statusCells" :key="c.text" class="cell center-text" :style="{ width: c.w + 'px' }">{{ c.text }}</span>
      <span class="cell layer-cell"><i class="swatch"></i>Default</span>
      <span
        v-for="c in statusToggles"
        :key="c.text"
        class="cell center-text"
        :class="{ on: c.on === 1, strong: c.on === 2 }"
        :style="{ width: c.w + 'px' }"
      >{{ c.text }}</span>
      <span class="cell tolerance">Absolute tolerance: 0.01</span>
      <span class="notify">1 новое у</span>
    </footer>

    <div class="watermark">
      <div class="wm-title">Активация Windows</div>
      <div class="wm-line">Чтобы активировать Windows, перейдите в раздел "Параметры".</div>
    </div>
  </div>
</template>

<style>
html, body { margin: 0; background: #e3e8ec; overflow: hidden; }
</style>

<style scoped>
.app {
  position: relative;
  width: 1680px;
  height: 945px;
  overflow: hidden;
  display: flex;
  flex-direction: column;
  background: #e1e6ea;
  color: #222;
  font-family: "Liberation Sans", Arial, sans-serif;
  font-size: 11px;
  letter-spacing: -0.25px;
  filter: blur(0.5px);
}
.defs { position: absolute; }
svg { display: block; }

.titlebar {
  height: 20px;
  display: flex;
  align-items: center;
  gap: 3px;
  padding-left: 2px;
  background: #fff;
  font-size: 11.400px;
  color: #333;
}
.app-icon { width: 15px; height: 15px; }
.recorder {
  position: absolute;
  left: 1162px;
  top: 3px;
  width: 319px;
  height: 20px;
  display: flex;
  align-items: center;
  padding: 0 2px 0 7px;
  box-sizing: border-box;
  background: #c6c6c6;
  color: #e4e4e4;
  font-size: 11px;
  white-space: nowrap;
}
.rec-icons { flex: none; }
.rec-right { margin-left: auto; }
.rec-arrow {
  flex: none;
  width: 0;
  height: 0;
  margin: 0 4px 0 1px;
  border: 4px solid transparent;
  border-top: 6px solid #f2f2f2;
  border-bottom: 0;
}
.rec-text { margin-left: 13px; }
.win-controls { position: absolute; top: 9px; left: 1634px; display: flex; gap: 26px; align-items: center; }
.win-min { width: 10px; height: 1px; background: #333; }
.win-max { width: 10px; height: 9px; border: 1px solid #333; }

.menubar {
  height: 18px;
  display: flex;
  align-items: center;
  gap: 13.200px;
  padding: 2px 0 0 6px;
  box-sizing: border-box;
  background: #fff;
  font-size: 11.300px;
  letter-spacing: -0.3px;
}
.logline, .cmdline {
  height: 18px;
  line-height: 18px;
  padding-left: 7px;
  background: #fff;
  border-top: 2px solid #e4e6e7;
  font-size: 11.700px;
}
.cmdline { border-top-color: #cfd1d2; font-size: 11px; font-weight: 700; }

.tabstrip {
  height: 22px;
  display: flex;
  align-items: flex-end;
  gap: 4.750px;
  padding-left: 8px;
  background: #dfe3e6;
  box-sizing: border-box;
  border-bottom: 1px solid #c6cbcf;
  border-top: 1px solid #cfd1d2;
}
.tooltab {
  height: 16px;
  line-height: 17px;
  padding: 0 5px;
  font-size: 10.300px;
  color: #333;
  background: #dde1e5;
  border: 1px solid #cdd2d6;
  border-bottom: 0;
  border-radius: 5px 4px 0 0;
  transform: translateY(1px);
}
.tooltab.active { background: #f8f9fa; padding: 0 6px; }

.iconbar {
  height: 36px;
  display: flex;
  align-items: flex-start;
  padding: 1.500px 0 0 6px;
  box-sizing: border-box;
  background: linear-gradient(#f7f8f9, #dde2e6);
}
.tbtn {
  position: relative;
  flex: none;
  width: 25.100px;
  height: 24px;
  display: flex;
  align-items: center;
  justify-content: center;
}
.tbtn svg { width: 20px; height: 20px; }
.tbtn.fly::after {
  content: "";
  position: absolute;
  right: 1px;
  bottom: 1px;
  border: 2.500px solid transparent;
  border-right-color: #555;
  border-bottom-color: #555;
}
.gap-2 { margin-left: 2px; }
.gap-3 { margin-left: 3px; }

.workspace { flex: none; height: 769px; display: flex; }
.sidebar {
  width: 66px;
  flex: none;
  box-sizing: border-box;
  padding: 2px 0 0 1px;
  background: #dfe5ea;
}
.gripper { height: 3px; margin: 0 6px 1px 2px; background: #cfd4d8; }
.siderow { display: flex; height: 25.500px; align-items: center; }
.center { width: 1423px; flex: none; display: flex; flex-direction: column; }
.viewport { position: relative; height: 747px; background: #9d9d9d; overflow: hidden; }
.scene { position: absolute; inset: 0; width: 100%; height: 100%; }
.scene-text { font-family: "Liberation Sans", Arial, sans-serif; letter-spacing: 0; fill: #0c0c0c; stroke: #0c0c0c; stroke-width: 0.6px; }
.axis-text { font-size: 11px; fill: #666; font-family: "Liberation Sans", Arial, sans-serif; }
.vp-label {
  position: absolute;
  z-index: 1;
  left: 0;
  top: 1px;
  width: 80px;
  height: 17px;
  line-height: 17px;
  padding-left: 8px;
  box-sizing: border-box;
  background: #86a4c3;
  color: #1c2c3c;
  font-size: 10.800px;
}
.vp-sep { position: absolute; left: 70px; top: 1px; width: 1px; height: 15px; background: #2a3a4c; }
.vp-caret {
  position: absolute;
  left: 72px;
  top: 6px;
  border: 3.500px solid transparent;
  border-top: 4px solid #1c2c3c;
  border-bottom: 0;
}

.vp-tabs { height: 22px; display: flex; align-items: flex-start; background: #e1e6ea; }
.vp-tab {
  height: 19px;
  line-height: 20px;
  padding: 0 7.500px;
  font-size: 11px;
  color: #333;
  background: #d9dee3;
  border-right: 1px solid #b8bec4;
  border-bottom: 1px solid #b8bec4;
  border-radius: 0 0 4px 4px;
  margin-right: 1px;
}
.vp-tab.active { background: #fbfcfc; padding: 0 9px 0 9px; }
.vp-tab.add { display: flex; align-items: center; padding: 0 7px; background: #e1e6ea; }

.panels { flex: 1; min-width: 0; margin-left: 6px; display: flex; flex-direction: column; overflow: hidden; background: #e1e6ea; }
.panel-tabs {
  height: 30px;
  margin-top: 4px;
  padding-left: 3px;
  box-sizing: border-box;
  display: flex;
  gap: 4px;
  background: #e6eaed;
  flex: none;
}
.ptab {
  display: flex;
  align-items: center;
  gap: 2px;
  height: 26px;
  width: 41px;
  flex: none;
  font-size: 10.500px;
  background: #dde2e6;
  border-radius: 3px 3px 0 0;
  box-sizing: border-box;
  padding-left: 2px;
}
.ptab svg { width: 14px; height: 14px; flex: none; }
.ptab.active { background: #fcfcfc; }
.props {
  flex: none;
  height: 347px;
  box-sizing: border-box;
  padding-left: 1px;
  background: #f3f4f5;
  border-bottom: 1px solid #cfd3d6;
  overflow: hidden;
}
.prop-head { height: 21.200px; line-height: 21.200px; padding-left: 7px; font-size: 10.500px; color: #333; background: #f3f4f5; }
.prop-row { height: 17.250px; display: flex; align-items: stretch; font-size: 10.500px; background: #fff; border-bottom: 1px solid #eef0f1; box-sizing: border-box; }
.prop-label { width: 117px; flex: none; padding-left: 15px; box-sizing: border-box; line-height: 16px; color: #333; background: #fbfbfb; border-right: 1px solid #e6e8e9; }
.prop-value { flex: 1; padding-left: 3px; line-height: 16px; color: #333; }
.prop-row.off .prop-label { color: #a4a4a4; }
.prop-row.off .prop-value { color: #9a9a9a; background: #dfe3e6; }
.prop-btn { flex: 1; margin-left: 1px; background: #e0e0e0; border: 1px solid #c6c6c6; line-height: 14px; padding-left: 33px; color: #333; }

.layers-gap { height: 7px; flex: none; background: #dfe3e6; }
.layer-tabs { height: 21px; flex: none; display: flex; align-items: flex-end; padding-left: 1px; background: #e6eaed; }
.ltab {
  display: flex;
  align-items: center;
  gap: 3px;
  width: 62px;
  height: 21px;
  padding-left: 3px;
  box-sizing: border-box;
  background: #fbfbfb;
  font-size: 10.800px;
  border-radius: 3px 10px 0 0;
}
.ltab svg { width: 15px; height: 15px; }
.layers { flex: 1; min-height: 0; display: flex; flex-direction: column; background: #fff; padding-left: 1px; }
.layer-tools { height: 19px; flex: none; display: flex; align-items: center; gap: 5.300px; padding-left: 2px; background: #f4f5f6; border-bottom: 1px solid #d5d8da; }
.layer-tools svg { width: 14px; height: 14px; flex: none; }
.layer-head { height: 21px; flex: none; position: relative; display: flex; align-items: center; font-size: 10.500px; color: #444; }
.lh-name { position: absolute; left: 7px; }
.lh-mat { position: absolute; left: 152px; }
.layer-head i { width: 1px; height: 18px; background: #eee; position: absolute; top: 1px; }
.layer-head i:nth-of-type(1) { left: 83px; }
.layer-head i:nth-of-type(2) { left: 99px; }
.layer-head i:nth-of-type(3) { left: 114px; }
.layer-head i:nth-of-type(4) { left: 130px; }
.layer-row { height: 15.400px; flex: none; position: relative; font-size: 10.500px; line-height: 15.400px; color: #333; }
.l-name { position: absolute; left: 7px; }
.current .l-name { left: 8px; font-weight: 700; color: #111; }
.l-check { position: absolute; left: 85px; font-size: 12px; font-weight: 700; color: #000; font-family: "DejaVu Sans", sans-serif; }
.l-bulb { position: absolute; left: 101px; top: 1px; width: 10px; height: 13px; }
.l-lock { position: absolute; left: 117px; top: 2px; width: 11px; height: 11px; }
.l-color { position: absolute; left: 132px; top: 2px; width: 9px; height: 9px; border: 1px solid #222; }
.layer-fill { flex: 1; }
.hscroll { height: 15px; flex: none; display: flex; align-items: center; background: #e9e9e9; }
.hs-arrow { width: 16px; padding-left: 4px; box-sizing: border-box; font-weight: 700; font-size: 12px; }
.hs-thumb { width: 142px; height: 15px; background: #c6c6c6; }

.osnaps {
  flex: none;
  height: 24px;
  display: flex;
  align-items: center;
  gap: 6.400px;
  padding: 2px 0 0 9px;
  box-sizing: border-box;
  font-size: 10px;
  color: #444;
  background: #e1e6ea;
}
.snap { display: flex; align-items: center; gap: 3.500px; }
.box { width: 11px; height: 11px; border: 1px solid #555; background: #fff; display: block; }
.snap.dim .box { border-color: #c5c9cc; background: #e1e6ea; }
.snap.dim { margin-left: 1px; }

.statusbar {
  flex: 1;
  display: flex;
  align-items: stretch;
  box-sizing: border-box;
  border-top: 1px solid #aeb3b8;
  background: #e3e8ec;
  font-size: 10.600px;
  color: #333;
}
.cell { box-sizing: border-box; border-right: 1px solid #c2c7cb; line-height: 17px; flex: none; }
.center-text { text-align: center; }
.layer-cell { width: 158px; display: flex; align-items: center; padding-left: 4px; gap: 3px; }
.swatch { width: 12px; height: 12px; background: #000; display: block; }
.cell.on { background: #f1f5f8; font-weight: 700; color: #222; }
.cell.strong { background: #e6f1fa; font-weight: 700; color: #222; }
.tolerance { width: 612px; padding-left: 4px; }
.notify { flex: 1; background: #fff; border: 1px solid #888; border-bottom: 0; padding-left: 5px; line-height: 15px; box-sizing: border-box; white-space: nowrap; overflow: hidden; }

.watermark { position: absolute; left: 1265px; top: 861px; pointer-events: none; white-space: nowrap; }
.wm-title { font-size: 17px; color: #a7a7a7; line-height: 20px; letter-spacing: 0; }
.wm-line { font-size: 13.600px; color: #b6babd; line-height: 20px; letter-spacing: 0; }
</style>
